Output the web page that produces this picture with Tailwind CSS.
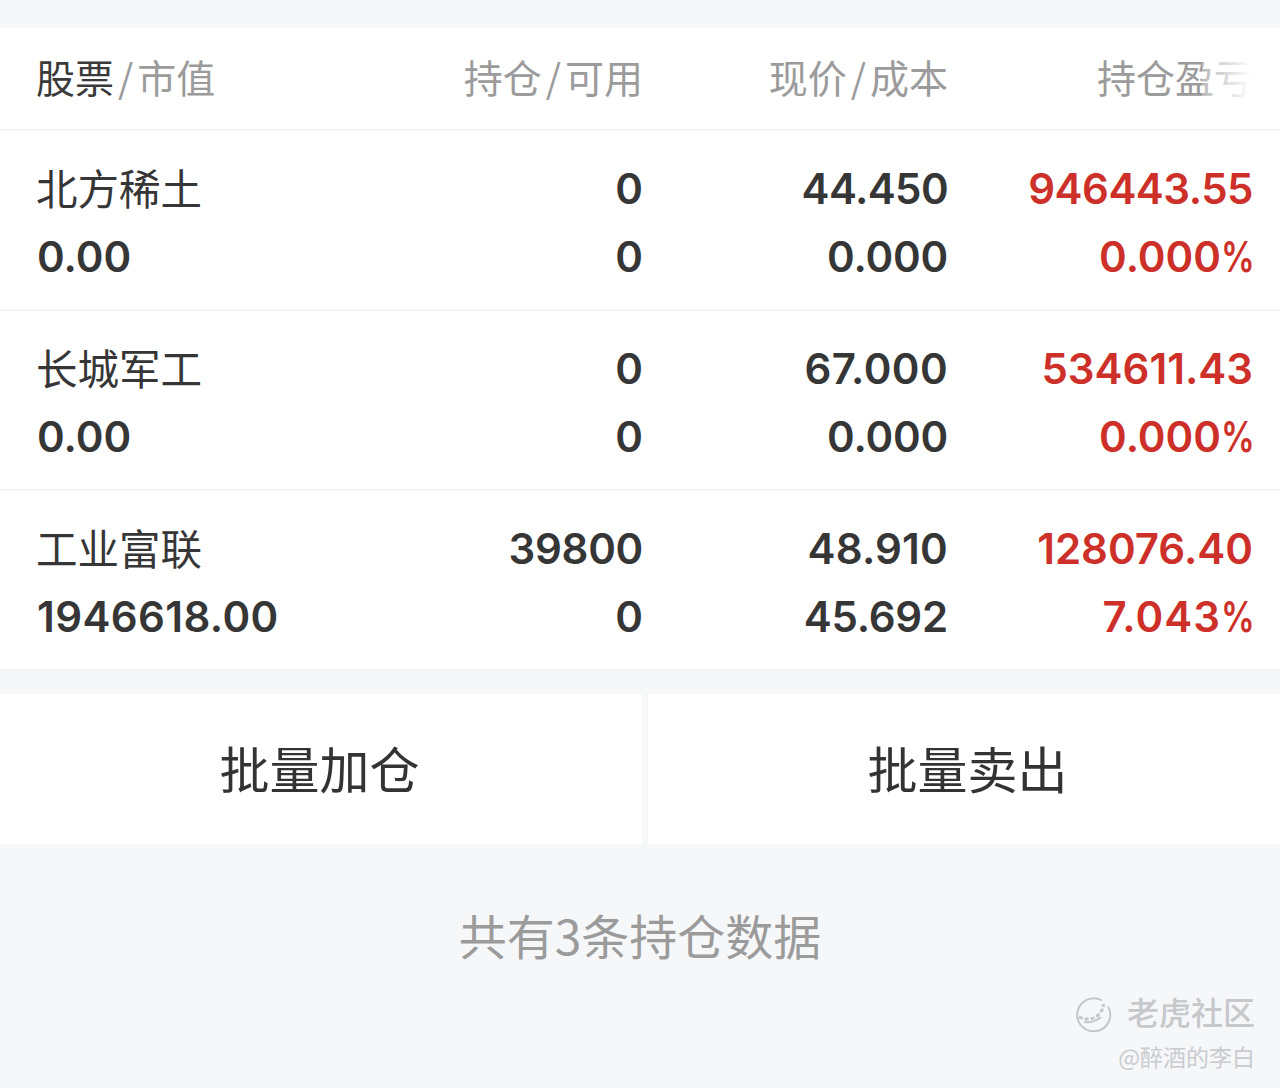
<!DOCTYPE html>
<html lang="zh-CN">
<head>
  <meta charset="UTF-8" />
  <title>持仓</title>
  <script src="https://cdn.jsdelivr.net/npm/@tailwindcss/browser@4"></script>
</head>
<body class="bg-[#f6f7f9] font-['Inter','Noto_Sans_CJK_SC',sans-serif]">
  <div class="relative w-[1280px] h-[1088px] overflow-hidden pt-[28px]">

    <!-- header -->
    <div class="relative bg-white h-[103px] border-b-2 border-[#f4f5f6] pl-[36px] pr-[27px] pb-[5px] grid grid-cols-[1fr_305px_305px_305px] items-center text-[39px] text-[#9b9b9b] font-['Noto_Sans_CJK_SC',sans-serif]">
      <div><span class="text-[#3a3a3a]">股票</span><span class="mx-[4px]">/</span>市值</div>
      <div class="text-right">持仓<span class="mx-[4px]">/</span>可用</div>
      <div class="text-right">现价<span class="mx-[4px]">/</span>成本</div>
      <div class="text-right">持仓盈亏</div>
      <div class="absolute right-[28px] top-[20px] w-[50px] h-[60px] bg-gradient-to-r from-white/30 to-white"></div>
    </div>

    <!-- rows -->
    <div class="bg-white h-[180px] border-b-2 border-[#f4f5f6] pl-[36px] pr-[27px] pt-[23px] grid grid-cols-[1fr_305px_305px_305px] grid-rows-[68px_68px] items-center text-[42px] font-semibold text-[#363636]">
      <div class="text-[41.5px] font-normal pb-[2px] font-['Noto_Sans_CJK_SC',sans-serif]">北方稀土</div>
      <div class="text-right">0</div>
      <div class="text-right tracking-[-0.6px]">44.450</div>
      <div class="text-right text-[#cc3029] tracking-[-0.5px]">946443.55</div>
      <div class="pl-[1px]">0.00</div>
      <div class="text-right">0</div>
      <div class="text-right tracking-[-0.2px]">0.000</div>
      <div class="text-right text-[#cc3029]">0.000<span class="inline-block w-[32px] text-left origin-left scale-x-[.8]">%</span></div>
    </div>
    <div class="bg-white h-[180px] border-b-2 border-[#f4f5f6] pl-[36px] pr-[27px] pt-[23px] grid grid-cols-[1fr_305px_305px_305px] grid-rows-[68px_68px] items-center text-[42px] font-semibold text-[#363636]">
      <div class="text-[41.5px] font-normal pb-[2px] font-['Noto_Sans_CJK_SC',sans-serif]">长城军工</div>
      <div class="text-right">0</div>
      <div class="text-right tracking-[0.4px]">67.000</div>
      <div class="text-right text-[#cc3029]">534611.43</div>
      <div class="pl-[1px]">0.00</div>
      <div class="text-right">0</div>
      <div class="text-right tracking-[-0.2px]">0.000</div>
      <div class="text-right text-[#cc3029]">0.000<span class="inline-block w-[32px] text-left origin-left scale-x-[.8]">%</span></div>
    </div>
    <div class="bg-white h-[180px] border-b-2 border-[#f4f5f6] pl-[36px] pr-[27px] pt-[23px] grid grid-cols-[1fr_305px_305px_305px] grid-rows-[68px_68px] items-center text-[42px] font-semibold text-[#363636]">
      <div class="text-[41.5px] font-normal pb-[2px] font-['Noto_Sans_CJK_SC',sans-serif]">工业富联</div>
      <div class="text-right tracking-[-0.3px]">39800</div>
      <div class="text-right tracking-[0.2px]">48.910</div>
      <div class="text-right text-[#cc3029]">128076.40</div>
      <div class="pl-[1px] tracking-[0.4px]">1946618.00</div>
      <div class="text-right">0</div>
      <div class="text-right tracking-[-0.2px]">45.692</div>
      <div class="text-right text-[#cc3029] tracking-[1px]">7.043<span class="inline-block w-[32px] text-left origin-left scale-x-[.8]">%</span></div>
    </div>

    <!-- buttons -->
    <div class="mt-[23px] flex gap-[6px] h-[150px] text-[50px] text-[#333333] font-['Noto_Sans_CJK_SC',sans-serif]">
      <div class="w-[642px] bg-white flex items-center justify-center pb-[3px] pr-[3px]">批量加仓</div>
      <div class="flex-1 bg-white flex items-center justify-center pb-[3px] pl-[7px]">批量卖出</div>
    </div>

    <div class="h-[186px] flex items-center justify-center text-[48px] pb-[6px] text-[#9b9b9b] font-['Noto_Sans_CJK_SC',sans-serif]">共有3条持仓数据</div>

    <!-- watermark -->
    <div class="absolute left-[1076px] top-[996px] w-[36px] h-[36px]">
      <svg viewBox="0 0 36 36" width="36" height="36" fill="none" stroke="#c4c6c9" stroke-width="2">
        <path d="M26 4.5a16.5 16.5 0 1 0 6 6" />
        <path d="M3 21c6 3 14 3 19-2s6-8 5-11" stroke-width="3" stroke-dasharray="4 2" />
        <path d="M8 26c6 1 13-1 17-5" />
      </svg>
    </div>
    <div class="absolute right-[25px] top-[989px] text-[32px] leading-[44px] font-medium text-[#c6c8cb] font-['Noto_Sans_CJK_SC',sans-serif]">老虎社区</div>
    <div class="absolute right-[25px] top-[1040px] text-[23px] leading-[32px] text-[#c9cbce] font-['Noto_Sans_CJK_SC',sans-serif]">@醉酒的李白</div>
  </div>
</body>
</html>
